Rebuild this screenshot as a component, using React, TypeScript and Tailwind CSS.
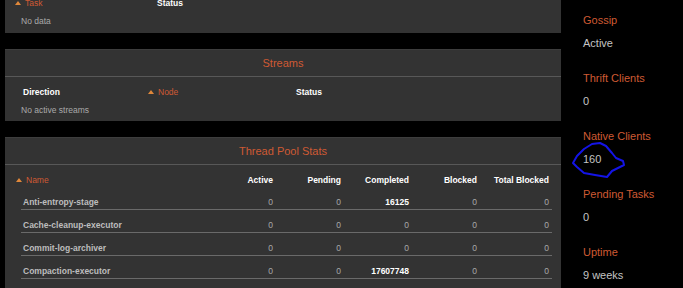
const font = { fontFamily: '"Liberation Sans", Arial, sans-serif' };

const threads = [
  { name: 'Anti-entropy-stage', active: 0, pending: 0, completed: 16125, blocked: 0, total: 0 },
  { name: 'Cache-cleanup-executor', active: 0, pending: 0, completed: 0, blocked: 0, total: 0 },
  { name: 'Commit-log-archiver', active: 0, pending: 0, completed: 0, blocked: 0, total: 0 },
  { name: 'Compaction-executor', active: 0, pending: 0, completed: 17607748, blocked: 0, total: 0 },
];

const stats = [
  { label: 'Gossip', value: 'Active' },
  { label: 'Thrift Clients', value: '0' },
  { label: 'Native Clients', value: '160' },
  { label: 'Pending Tasks', value: '0' },
  { label: 'Uptime', value: '9 weeks' },
];

function SortArrow() {
  return <span className="inline-block w-0 h-0 border-l-[3px] border-r-[3px] border-b-[4px] border-l-transparent border-r-transparent border-b-[#e0883a] mr-[4px] mb-[1px]" />;
}

function PanelTitle({ children }: { children: string }) {
  return (
    <div className="h-[27px] flex items-center justify-center border-b border-[#585858] text-[11px] text-[#cf5a33]">
      {children}
    </div>
  );
}

export default function App() {
  return (
    <div className="w-[683px] h-[288px] bg-black flex overflow-hidden relative" style={font}>
      <div className="w-[561px] pl-[5px] flex flex-col">
        {/* top panel, scrolled past */}
        <div className="bg-[#333333] h-[40px] -mt-[7px] relative">
          <div className="absolute top-[3px] left-[10px] flex items-center h-[14px] text-[8.5px] text-[#cf5a33]">
            <SortArrow />
            Task
          </div>
          <div className="absolute top-[3px] left-[152px] h-[14px] leading-[14px] text-[8.5px] font-bold text-white">Status</div>
          <div className="absolute top-[21px] left-[16px] h-[14px] leading-[14px] text-[8.5px] text-[#aaaaaa]">No data</div>
        </div>

        {/* Streams */}
        <div className="bg-[#333333] mt-[16px] h-[72px] border-t border-[#3d3d3d]">
          <PanelTitle>Streams</PanelTitle>
          <div className="flex h-[22px] items-end text-[8.5px] pl-[18px]">
            <div className="w-[125px] font-bold text-white leading-[14px]">Direction</div>
            <div className="w-[148px] flex items-center text-[#cf5a33] leading-[14px]">
              <SortArrow />
              Node
            </div>
            <div className="font-bold text-white leading-[14px]">Status</div>
          </div>
          <div className="pl-[16px] pt-[4px] text-[8.5px] leading-[14px] text-[#aaaaaa]">No active streams</div>
        </div>

        {/* Thread Pool Stats */}
        <div className="bg-[#333333] mt-[16px] flex-1 border-t border-[#3d3d3d]">
          <PanelTitle>Thread Pool Stats</PanelTitle>
          <div className="text-[8.5px]">
            <div className="ml-[11px] grid grid-cols-[189px_68px_68px_68px_68px_72px] h-[22px] pt-[8px] leading-[14px] font-bold text-white">
              <div className="flex items-center text-[#cf5a33] font-normal">
                <SortArrow />
                Name
              </div>
              <div className="text-right">Active</div>
              <div className="text-right">Pending</div>
              <div className="text-right">Completed</div>
              <div className="text-right">Blocked</div>
              <div className="text-right">Total Blocked</div>
            </div>
            <div className="ml-[16px] w-[531px]">
              {threads.map((t) => (
                <div
                  key={t.name}
                  className="grid grid-cols-[184px_68px_68px_68px_68px_72px] h-[23px] pt-[8px] leading-[14px] border-b border-[#6a6a6a] text-[#a8a8a8]"
                >
                  <div className="pl-[2px] font-bold text-[#bdbdbd]">{t.name}</div>
                  <div className="text-right">{t.active}</div>
                  <div className="text-right">{t.pending}</div>
                  <div className={t.completed ? 'text-right font-bold text-white' : 'text-right'}>{t.completed}</div>
                  <div className="text-right">{t.blocked}</div>
                  <div className="text-right">{t.total}</div>
                </div>
              ))}
            </div>
          </div>
        </div>
      </div>

      <div className="flex-1 pl-[22px] pt-[9px] text-[11px]">
        {stats.map((s) => (
          <div key={s.label} className="mb-[12px]">
            <div className="h-[23px] leading-[23px] text-[#cf5a33]">{s.label}</div>
            <div className="h-[23px] leading-[23px] text-[#c4c4c4]">{s.value}</div>
          </div>
        ))}
      </div>

      <svg className="absolute left-[570px] top-[140px]" width="60" height="40" viewBox="570 140 60 40">
        <path
          d="M600 143 L606 146 L612 153 L616 158 L623 161 L624 165 L612 171 L607 177 L595 175 L584 173 L577 167 L573 163 L577 156 L584 149 L592 144 Z"
          fill="none"
          stroke="#1414e6"
          strokeWidth="2"
          strokeLinejoin="round"
        />
      </svg>
    </div>
  );
}
